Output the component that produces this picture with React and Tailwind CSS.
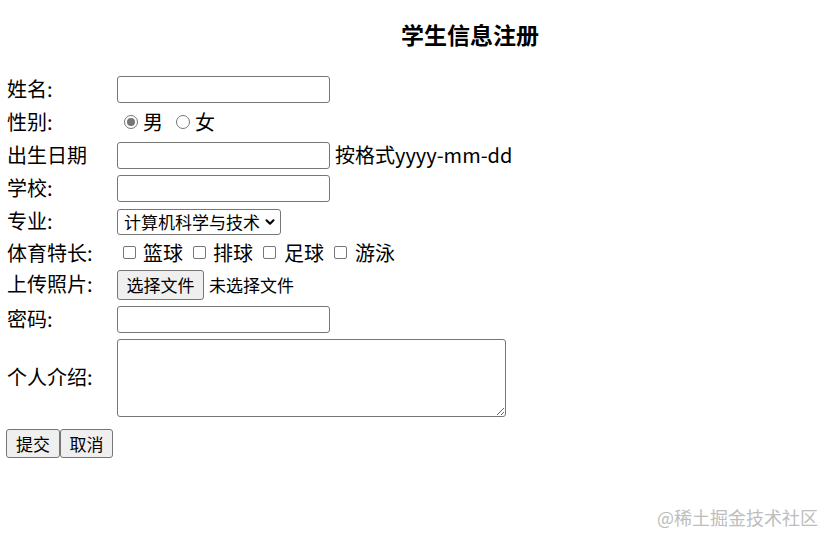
import { ChevronDown } from 'lucide-react';

const font = { fontFamily: '"Microsoft YaHei", "Noto Sans CJK SC", "Noto Sans", sans-serif' };

function Label({ children }) {
  return <div className="w-[117px] shrink-0 pl-[7px] -mt-[2px] text-[20px] leading-none text-black">{children}</div>;
}

function TextInput({ type = 'text' }) {
  return (
    <input
      type={type}
      className="w-[213px] h-[27px] border border-[#767676] rounded-[3px] bg-white outline-none px-1"
    />
  );
}

function Radio({ checked }) {
  return (
    <span className="inline-flex items-center justify-center w-[14px] h-[14px] rounded-full border border-[#767676] bg-white">
      {checked && <span className="w-[8px] h-[8px] rounded-full bg-[#767676]" />}
    </span>
  );
}

function Box() {
  return <span className="inline-block w-[13px] h-[13px] rounded-[2px] border border-[#767676] bg-white" />;
}

export default function App() {
  return (
    <div className="relative w-[835px] h-[547px] bg-white text-black overflow-hidden" style={font}>
      {/* caption */}
      <div className="pt-[20px] pl-[401px] text-[23px] font-bold leading-[28px]">学生信息注册</div>

      <div className="mt-[28px] flex flex-col gap-[6px]">
        <div className="flex items-center h-[27px]">
          <Label>姓名:</Label>
          <TextInput />
        </div>

        <div className="flex items-center h-[27px] text-[20px]">
          <Label>性别:</Label>
          <div className="flex items-center pl-[7px] -mt-[2px]">
            <Radio checked />
            <span className="ml-[5px]">男</span>
            <span className="ml-[13px] flex"><Radio /></span>
            <span className="ml-[5px]">女</span>
          </div>
        </div>

        <div className="flex items-center h-[27px]">
          <Label>出生日期</Label>
          <TextInput />
          <span className="ml-[5px] -mt-[2px] text-[20px]">按格式yyyy-mm-dd</span>
        </div>

        <div className="flex items-center h-[27px]">
          <Label>学校:</Label>
          <TextInput />
        </div>

        <div className="flex items-center h-[27px]">
          <Label>专业:</Label>
          <div className="flex items-center h-[26px] w-[164px] border border-[#767676] rounded-[3px] pl-[6px] pr-[3px] text-[17px]">
            <span className="flex-1">计算机科学与技术</span>
            <ChevronDown className="w-[14px] h-[14px]" strokeWidth={3.5} />
          </div>
        </div>

        <div className="flex items-center h-[25px] text-[20px]">
          <Label>体育特长:</Label>
          <div className="flex items-center pl-[6px] -mt-[2px]">
            <Box /><span className="ml-[7px]">篮球</span>
            <span className="ml-[10px] flex"><Box /></span><span className="ml-[7px]">排球</span>
            <span className="ml-[10px] flex"><Box /></span><span className="ml-[8px]">足球</span>
            <span className="ml-[10px] flex"><Box /></span><span className="ml-[8px]">游泳</span>
          </div>
        </div>

        <div className="flex items-center h-[30px] -mt-[2px]">
          <Label>上传照片:</Label>
          <button className="h-[30px] w-[87px] border border-[#767676] rounded-[3px] bg-[#efefef] text-[17px]">选择文件</button>
          <span className="ml-[5px] text-[17px]">未选择文件</span>
        </div>

        <div className="flex items-center h-[27px]">
          <Label>密码:</Label>
          <TextInput type="password" />
        </div>

        <div className="flex items-center h-[78px]">
          <Label>个人介绍:</Label>
          <textarea className="w-[389px] h-[78px] border border-[#767676] rounded-[3px] outline-none resize" />
        </div>

        <div className="flex items-center pl-[6px] mt-[6px]">
          <button className="h-[29px] w-[54px] border border-[#767676] rounded-[3px] bg-[#efefef] text-[17px]">提交</button>
          <button className="h-[29px] w-[53px] border border-[#767676] rounded-[3px] bg-[#efefef] text-[17px]">取消</button>
        </div>
      </div>

      <div className="absolute right-[17px] bottom-[16px] text-[18px] text-[#bdbdbd]">@稀土掘金技术社区</div>
    </div>
  );
}
